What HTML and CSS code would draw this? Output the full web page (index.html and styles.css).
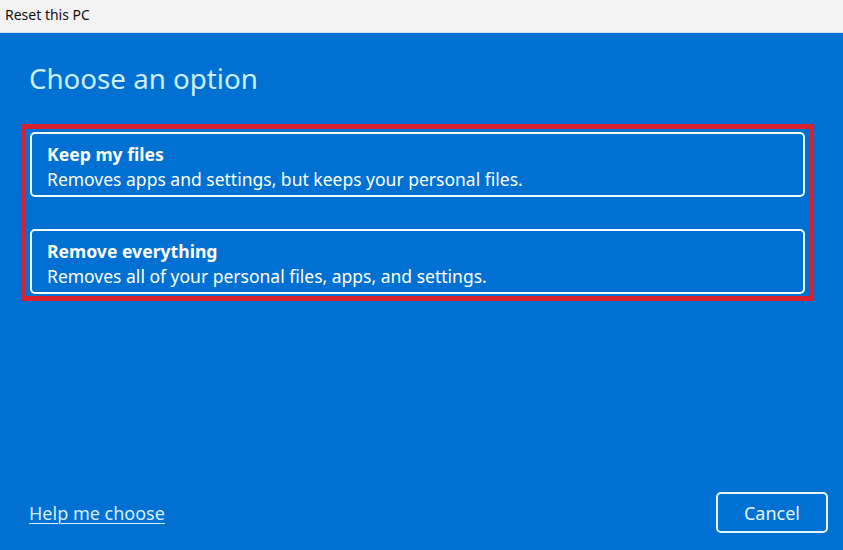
FILE: index.html
```html
<!DOCTYPE html>
<html lang="en">
<head>
<meta charset="utf-8">
<title>Reset this PC</title>
<link rel="stylesheet" href="styles.css">
</head>
<body>
<div class="window">
  <div class="titlebar">Reset this PC</div>
  <div class="content">
    <h1 class="heading">Choose an option</h1>
    <div class="highlight">
      <div class="option">
        <div class="option-title">Keep my files</div>
        <div class="option-desc">Removes apps and settings, but keeps your personal files.</div>
      </div>
      <div class="option">
        <div class="option-title">Remove everything</div>
        <div class="option-desc">Removes all of your personal files, apps, and settings.</div>
      </div>
    </div>
    <div class="spacer"></div>
    <div class="footer">
      <a class="help" href="#">Help me choose</a>
      <button class="cancel" type="button">Cancel</button>
    </div>
  </div>
</div>
</body>
</html>
```
FILE: styles.css
```css
* { box-sizing: border-box; }
html, body { margin: 0; padding: 0; }
body {
  width: 843px;
  height: 550px;
  overflow: hidden;
  font-family: "Noto Sans", "Open Sans", sans-serif;
}
.window {
  display: flex;
  flex-direction: column;
  height: 550px;
}
.titlebar {
  height: 33px;
  background: #f3f3f3;
  color: #111;
  font-size: 14px;
  padding: 5px 0 0 5px;
  border-bottom: 1px solid #cfe3f3;
}
.content {
  flex: 1;
  background: #0071d2;
  display: flex;
  flex-direction: column;
  padding: 27px 15px 17px 21px;
}
.heading {
  margin: 0 0 28px 8px;
  font-weight: 400;
  font-size: 27.7px;
  line-height: 36px;
  color: #cdeeff;
}
.highlight {
  border: 5px solid #d9202e;
  padding: 3px 4px 2px 4px;
  margin-right: 14px;
  display: flex;
  flex-direction: column;
  gap: 32px;
}
.option {
  border: 2.5px solid #f2f9ff;
  border-radius: 5px;
  height: 65px;
  padding: 8px 0 0 15px;
  color: #fff;
}
.option-title {
  font-weight: 700;
  font-size: 17.6px;
  line-height: 24px;
}
.option-desc {
  font-size: 17.5px;
  line-height: 26px;
}
.spacer { flex: 1; }
.footer {
  display: flex;
  justify-content: space-between;
  align-items: center;
  padding-left: 8px;
}
.help {
  color: #d6efff;
  font-size: 18px;
  text-decoration: underline;
  text-underline-offset: 3px;
  text-decoration-thickness: 1px;
}
.cancel {
  width: 112px;
  height: 41px;
  background: #0071d2;
  border: 2.5px solid #e6f5ff;
  border-radius: 5px;
  color: #e6f5ff;
  font-family: inherit;
  font-size: 18px;
}
```
